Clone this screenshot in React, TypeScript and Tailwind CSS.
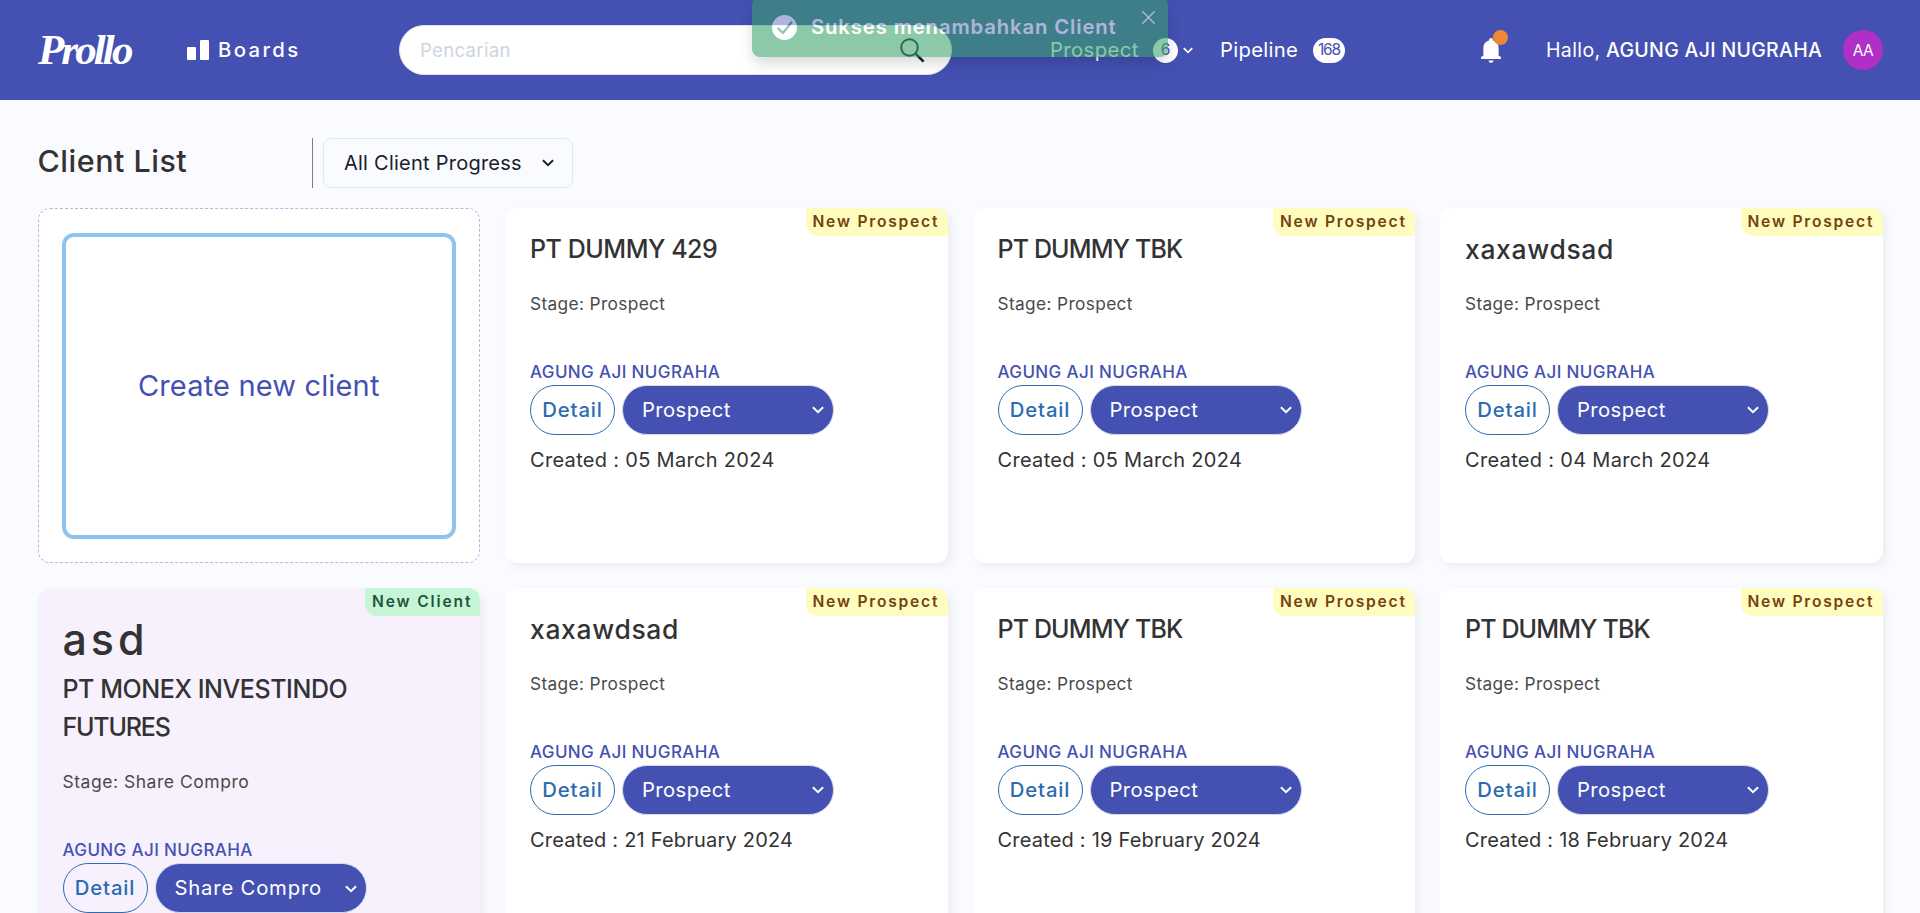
type Client = {
  title: string;
  titleStyle: string;
  created: string;
  heading?: string;
  subtitle?: string;
  stage?: string;
};

const mixed = "text-[25px] tracking-[-0.46px]";
const capitals = "text-[25px] tracking-[-0.87px]";
const lowercase = "text-[26.5px] tracking-[0.65px]";

const clients: Client[] = [
  { title: "PT DUMMY 429", titleStyle: mixed, created: "05 March 2024" },
  { title: "PT DUMMY TBK", titleStyle: capitals, created: "05 March 2024" },
  { title: "xaxawdsad", titleStyle: lowercase, created: "04 March 2024" },
  {
    heading: "asd",
    title: "PT MONEX INVESTINDO",
    subtitle: "FUTURES",
    titleStyle: "text-[25px] tracking-[-0.44px]",
    created: "22 February 2024",
    stage: "Share Compro",
  },
  { title: "xaxawdsad", titleStyle: lowercase, created: "21 February 2024" },
  { title: "PT DUMMY TBK", titleStyle: capitals, created: "19 February 2024" },
  { title: "PT DUMMY TBK", titleStyle: capitals, created: "18 February 2024" },
];

function Chevron({ className }: { className: string }) {
  return (
    <svg viewBox="0 0 12 8" className={className} fill="none" stroke="currentColor" strokeWidth="2">
      <path d="M0.9 1.2 L6 6.2 L11.1 1.2" />
    </svg>
  );
}

function ClientCard({ client }: { client: Client }) {
  const isClient = client.stage !== undefined;
  const stage = client.stage ?? "Prospect";
  return (
    <article
      className={`relative rounded-xl px-[25px] shadow-[4px_4px_10px_rgba(0,0,0,0.06)] ${
        isClient ? "h-[483px] bg-[#f7f1fe] pt-[26px]" : "h-[355px] bg-white pt-[23px]"
      }`}
    >
      <span
        className={`absolute right-0 top-0 flex h-7 items-center rounded-[2px_12px_2px_12px] pl-[7px] text-[15.6px] font-semibold whitespace-nowrap ${
          isClient
            ? "w-[115px] bg-[#c6f6d5] tracking-[1.85px] text-[#22543d]"
            : "w-[142px] bg-[#fefcbf] tracking-[1.78px] text-[#744210]"
        }`}
      >
        {isClient ? "New Client" : "New Prospect"}
      </span>

      {client.heading && (
        <h2 className="mb-[7px] h-[50px] text-[43px] leading-[50px] font-medium tracking-[3.9px]">{client.heading}</h2>
      )}
      <h3 className={`leading-[37.5px] font-medium ${client.titleStyle}`}>
        {client.title}
        {client.subtitle && <span className="block tracking-[-1.2px]">{client.subtitle}</span>}
      </h3>
      <p
        className={`h-[26px] leading-[26px] text-[#4a4a4a] ${
          isClient ? "mt-[23px] text-[17.5px] tracking-[0.53px]" : "mt-[22px] text-[17.3px] tracking-[0.36px]"
        }`}
      >
        Stage: {stage}
      </p>
      <p className="mt-[42px] h-[26px] text-[17px] leading-[26px] font-medium tracking-[0.38px] text-[#4451b2]">
        AGUNG AJI NUGRAHA
      </p>
      <div className="flex gap-[7px]">
        <button className="h-[50px] w-[85px] rounded-full border border-[#2b6cb0] pt-px text-[20.3px] font-medium tracking-[0.9px] text-[#2b6cb0]">
          Detail
        </button>
        <button
          className={`flex h-[50px] w-[212px] items-center justify-between rounded-full border border-[#d5d9ee] bg-[#4451b2] pt-px pr-[9px] pl-[19px] text-[20.3px] text-white ${
            isClient ? "tracking-[0.8px]" : "tracking-[0.4px]"
          }`}
        >
          {stage}
          <Chevron className="h-2 w-3" />
        </button>
      </div>
      <p
        className={`mt-[10px] text-[20px] leading-[30px] ${
          client.created.includes("March") ? "tracking-[0.31px]" : "tracking-[0.2px]"
        }`}
      >
        Created : {client.created}
      </p>
    </article>
  );
}

function Toast() {
  return (
    <div className="absolute top-[-3px] left-[752px] flex h-[60px] w-[416px] items-center rounded-lg bg-[#38a169] pl-5 text-white opacity-[0.573] shadow-[0_10px_15px_-3px_rgba(0,0,0,0.16),0_4px_12px_rgba(0,0,0,0.12)]">
      <svg viewBox="0 0 25 25" className="h-[25px] w-[25px]">
        <circle cx="12.5" cy="12.5" r="12.5" fill="white" />
        <path d="M6.3 13.6 L11 18 L19.4 7.4" fill="none" stroke="#38a169" strokeWidth="2.2" strokeLinecap="round" strokeLinejoin="round" />
      </svg>
      <span className="ml-[14px] pt-px text-[20.3px] font-semibold tracking-[0.87px] whitespace-nowrap">
        Sukses menambahkan Client
      </span>
      <svg viewBox="0 0 13 13" className="absolute top-[14px] left-[390px] h-[13px] w-[13px]" fill="none" stroke="white" strokeWidth="1.5" strokeLinecap="round">
        <path d="M0.8 0.8 L12.2 12.2 M12.2 0.8 L0.8 12.2" />
      </svg>
    </div>
  );
}

function Header() {
  return (
    <header className="flex h-[100px] items-center bg-[#4451b2] text-[19.5px] text-white">
      <div className="ml-[38px] w-[149px] pb-[2px] font-['Liberation_Serif',serif] text-[43px] leading-none font-bold tracking-[-2.9px] italic">
        Prollo
      </div>
      <svg viewBox="0 0 22 20" className="h-5 w-[22px]" fill="white">
        <rect x="0" y="7" width="9" height="13" rx="1" />
        <rect x="13" y="0" width="9" height="20" rx="1" />
      </svg>
      <span className="ml-[9px] w-[181px] pt-px text-[20.3px] font-medium tracking-[2.4px]">Boards</span>
      <div className="flex h-[50px] w-[553px] shrink-0 items-center justify-between rounded-full border border-[#dfe4f0] bg-white pr-[26px] pl-5">
        <span className="pt-px text-[18.5px] tracking-[0.35px] text-[#cbd5e0]">Pencarian</span>
        <svg viewBox="0 0 25 25" className="h-[25px] w-[25px]" fill="none" stroke="#1a202c">
          <circle cx="9.5" cy="9.5" r="8.3" strokeWidth="2" />
          <path d="M15.6 15.8 L23.6 23.6" strokeWidth="2.6" />
        </svg>
      </div>
      <div className="ml-[98px] flex items-center">
        <span className="w-[103px] pt-px text-[20.3px] tracking-[0.4px]">Prospect</span>
        <span className="flex h-[25px] w-[25px] items-center justify-center rounded-full bg-white text-[15.5px] text-[#4451b2]">6</span>
        <Chevron className="ml-[5px] h-[7px] w-[10px]" />
      </div>
      <div className="ml-[27px] flex items-center">
        <span className="w-[93px] pt-px text-[20.3px] tracking-[0.3px]">Pipeline</span>
        <span className="flex h-[25px] w-8 items-center justify-center rounded-full bg-white text-[15.5px] tracking-[-1.1px] text-[#4451b2]">
          168
        </span>
      </div>
      <div className="relative ml-[136px] h-[25px] w-5">
        <svg viewBox="0 0 20 25" className="h-[25px] w-5" fill="white">
          <path d="M0 21 V19 L2.4 17.5 V10 C2.4 6 4.6 3.4 8 2.6 V2 A2 2 0 0 1 12 2 V2.6 C15.4 3.4 17.6 6 17.6 10 V17.5 L20 19 V21 Z" />
          <path d="M7.5 22.5 H12.5 A2.5 2.3 0 0 1 7.5 22.5 Z" />
        </svg>
        <span className="absolute -top-[8px] left-3 h-[15px] w-[15px] rounded-full bg-[#ed8936]" />
      </div>
      <span className="ml-[45px] w-[60px] pt-px tracking-[0.38px]">Hallo,</span>
      <span className="w-[237px] pt-px font-medium tracking-[0.32px] whitespace-nowrap">AGUNG AJI NUGRAHA</span>
      <span className="flex h-10 w-10 items-center justify-center rounded-full bg-[#b02fc6] pt-px text-[15.5px] tracking-[-0.5px]">AA</span>
    </header>
  );
}

export default function App() {
  return (
    <div className="relative h-[913px] w-[1920px] overflow-hidden bg-[#fafbfe] font-['Inter',sans-serif] text-[#333333]">
      <Header />
      <main className="px-[37.5px]">
        <div className="flex h-[108px] pt-[38px]">
          <h1 className="h-[50px] w-[274.5px] text-[30.5px] leading-[45px] font-medium tracking-[0.5px]">Client List</h1>
          <div className="h-[50px] w-px bg-[#7b7d82]" />
          <button className="ml-[10px] flex h-[50px] w-[250px] items-center justify-between rounded-lg border border-[#e2e8f0] pr-[18px] pl-5 text-[20px] tracking-[0.24px] text-[#1a202c]">
            All Client Progress
            <Chevron className="h-2 w-3" />
          </button>
        </div>
        <div className="grid grid-cols-4 items-start gap-[25px]">
          <div className="h-[355px] rounded-xl border border-dashed border-[#b4b9e0] bg-white p-[23.5px]">
            <button className="h-[306px] w-full rounded-xl border-4 border-[#8ec3ee] text-[29px] tracking-[0.16px] text-[#4451b2]">
              Create new client
            </button>
          </div>
          {clients.map((client, i) => (
            <ClientCard key={i} client={client} />
          ))}
        </div>
      </main>
      <Toast />
    </div>
  );
}
